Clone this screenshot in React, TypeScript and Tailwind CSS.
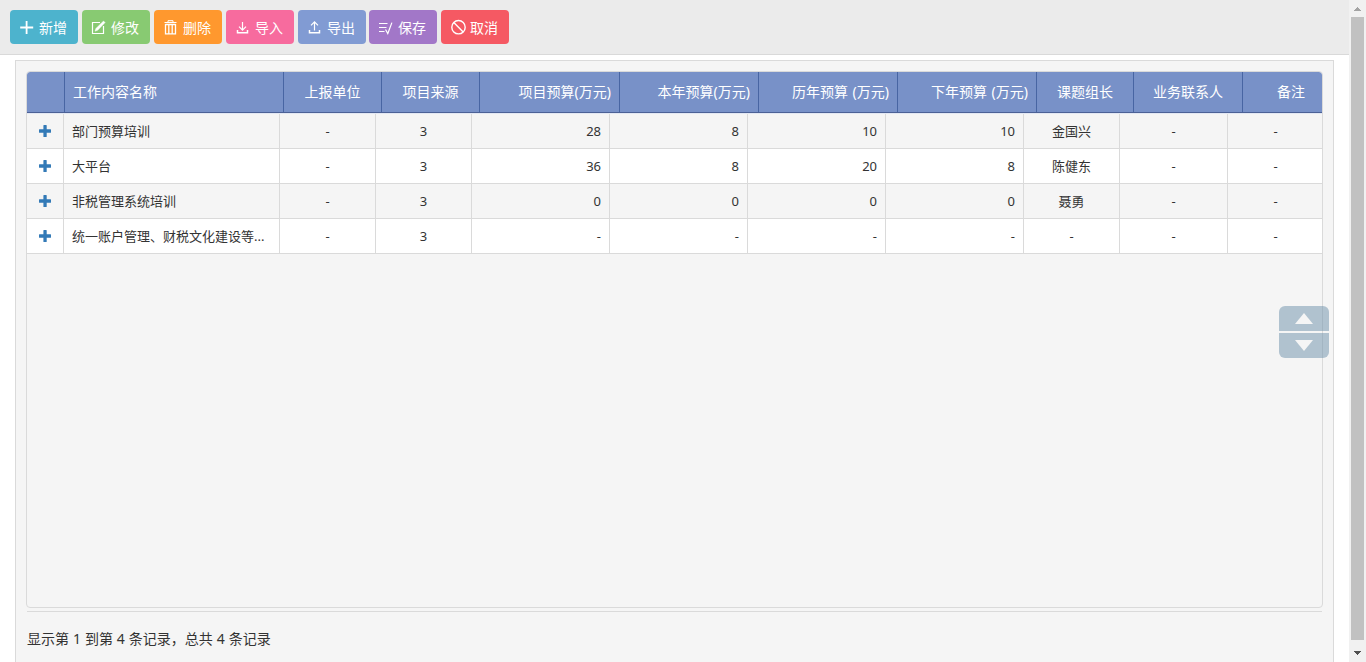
import React from 'react';

type Align = 'left' | 'center' | 'right';

const alignClass: Record<Align, string> = {
  left: 'justify-start',
  center: 'justify-center',
  right: 'justify-end',
};

interface Column {
  title: string;
  align: Align;
  head: string;
  body: string;
}

const columns: Column[] = [
  { title: '', align: 'center', head: 'w-[38px]', body: 'w-[37px]' },
  { title: '工作内容名称', align: 'left', head: 'w-[219px]', body: 'w-[216px]' },
  { title: '上报单位', align: 'center', head: 'w-[98px]', body: 'w-[96px]' },
  { title: '项目来源', align: 'center', head: 'w-[98px]', body: 'w-[96px]' },
  { title: '项目预算(万元)', align: 'right', head: 'w-[140px]', body: 'w-[138px]' },
  { title: '本年预算(万元)', align: 'right', head: 'w-[139px]', body: 'w-[138px]' },
  { title: '历年预算 (万元)', align: 'right', head: 'w-[139px]', body: 'w-[138px]' },
  { title: '下年预算 (万元)', align: 'right', head: 'w-[139px]', body: 'w-[138px]' },
  { title: '课题组长', align: 'center', head: 'w-[97px]', body: 'w-[96px]' },
  { title: '业务联系人', align: 'center', head: 'w-[109px]', body: 'w-[108px]' },
  { title: '备注', align: 'center', head: 'w-[97px]', body: 'w-[95px]' },
];

const rows: string[][] = [
  ['部门预算培训', '-', '3', '28', '8', '10', '10', '金国兴', '-', '-'],
  ['大平台', '-', '3', '36', '8', '20', '8', '陈健东', '-', '-'],
  ['非税管理系统培训', '-', '3', '0', '0', '0', '0', '聂勇', '-', '-'],
  ['统一账户管理、财税文化建设等...', '-', '3', '-', '-', '-', '-', '-', '-', '-'],
];

function Icon({ children }: { children: React.ReactNode }) {
  return (
    <svg
      width="16"
      height="16"
      viewBox="0 0 16 16"
      fill="none"
      stroke="currentColor"
      strokeWidth="1.2"
      className="shrink-0"
    >
      {children}
    </svg>
  );
}

const buttons = [
  {
    label: '新增',
    color: 'mr-1 bg-[#4db3cd]',
    icon: <path d="M7.6 2v13M1.2 8.500h13" strokeWidth="1.8" />,
  },
  {
    label: '修改',
    color: 'mr-1 bg-[#88ca72]',
    icon: (
      <>
        <path d="M9 3.500H1.500v11h11V7" />
        <path d="M4 12.200l.9-2.800 7.600-7.400 1.600 1.600-7.400 7.600z" fill="currentColor" strokeWidth="0.4" />
      </>
    ),
  },
  {
    label: '删除',
    color: 'mr-1 bg-[#ff982e]',
    icon: (
      <>
        <path d="M5 3V1.700h5V3M1.500 3.500h12" strokeWidth="1" />
        <path d="M2.500 5v9.800h10V5M2.500 5.500h10M5.800 5v9.500M9.200 5v9.500" strokeWidth="1.300" />
      </>
    ),
  },
  {
    label: '导入',
    color: 'mr-1 bg-[#f76b9e]',
    icon: (
      <>
        <path d="M7.500 3v8M4 7.700l3.500 3.500L11 7.700" />
        <path d="M2.500 11v2.800h10V11" strokeWidth="1.500" />
      </>
    ),
  },
  {
    label: '导出',
    color: 'mr-[3px] bg-[#819bd3]',
    icon: (
      <>
        <path d="M7.500 11.500V3M4 6.400l3.500-3.500L11 6.400" />
        <path d="M2.500 11v2.800h10V11" strokeWidth="1.500" />
      </>
    ),
  },
  {
    label: '保存',
    color: 'mr-1 bg-[#a277c8]',
    icon: <path d="M1 4.500h8.500M1 8.500h7.500M1 12.500h5.500M7.500 10.500l2.300 4L13.900 3.600" />,
  },
  {
    label: '取消',
    color: 'bg-[#f55963]',
    icon: (
      <>
        <circle cx="8.500" cy="8.200" r="6.700" strokeWidth="1.400" />
        <path d="M3.800 3.500l9.400 9.400" strokeWidth="1.400" />
      </>
    ),
  },
];

function Toolbar() {
  return (
    <div className="flex h-[55px] border-b border-[#d9d9d9] bg-[#ebebeb] pt-2.5 pl-2.5">
      {buttons.map((b) => (
        <button
          key={b.label}
          className={`flex h-[34px] w-[68px] shrink-0 items-center gap-1 rounded-[4px] pl-[9px] text-[14px] leading-5 whitespace-nowrap text-white ${b.color}`}
        >
          <Icon>{b.icon}</Icon>
          <span className="pt-0.5">{b.label}</span>
        </button>
      ))}
    </div>
  );
}

function TableHead() {
  return (
    <div className="flex h-[41px] overflow-hidden rounded-t-[3px] border-b border-[#4c6196] bg-[#7891c8] text-[14px] text-white [word-spacing:1px]">
      {columns.map((c, i) => (
        <div
          key={i}
          className={`flex shrink-0 items-center border-r border-[#4865a3] px-2 pb-0.5 whitespace-nowrap ${c.head} ${alignClass[c.align]}`}
        >
          {c.title}
        </div>
      ))}
    </div>
  );
}

function TableBody() {
  return (
    <div className="border-t border-[#e3e8f3] text-[13px] text-[#333]">
      {rows.map((row, r) => (
        <div
          key={r}
          className={`flex h-[35px] overflow-hidden border-b border-[#dadada] ${r % 2 === 0 ? 'bg-[#f5f5f5]' : 'bg-white'}`}
        >
          {columns.map((c, i) => (
            <div
              key={i}
              className={`flex shrink-0 items-center border-[#dadada] whitespace-nowrap ${i === 0 ? 'pr-[9px] pl-2' : 'px-2'} ${i < columns.length - 1 ? 'border-r' : ''} ${c.body} ${alignClass[c.align]}`}
            >
              {i === 0 ? (
                <svg width="12" height="12" viewBox="0 0 12 12" className="shrink-0" fill="#337ab7">
                  <path d="M4.900 0h2.300q.5 0 .5.5v3.800h3.800q.5 0 .5.5v2.400q0 .5-.5.5H7.700v3.800q0 .5-.5.5H4.900q-.5 0-.5-.5V7.700H.5q-.5 0-.5-.5V4.800q0-.5.5-.5h3.900V.5q0-.5.5-.5z" />
                </svg>
              ) : (
                <span className="pt-px">{row[i - 1]}</span>
              )}
            </div>
          ))}
        </div>
      ))}
    </div>
  );
}

function PageJump() {
  return (
    <div className="absolute top-[306px] left-[1279px] flex w-[50px] flex-col gap-[2px]">
      <button className="flex h-[25px] items-center justify-center rounded-t-[6px] bg-[#7698af]/55">
        <svg width="18" height="11" viewBox="0 0 18 11" fill="#f5f5f5">
          <path d="M9 0l9 11H0z" />
        </svg>
      </button>
      <button className="flex h-[25px] items-center justify-center rounded-b-[6px] bg-[#7698af]/55">
        <svg width="18" height="11" viewBox="0 0 18 11" fill="#f5f5f5">
          <path d="M9 11l9-11H0z" />
        </svg>
      </button>
    </div>
  );
}

function Scrollbar() {
  return (
    <div className="flex w-[17px] shrink-0 flex-col items-center bg-[#f1f1f1]">
      <div className="flex h-[17px] items-center justify-center">
        <svg width="7" height="4" viewBox="0 0 7 4" fill="#a3a3a3" shapeRendering="crispEdges">
          <path d="M3.500 0L7 4H0z" />
        </svg>
      </div>
      <div className="w-[13px] flex-1 bg-[#c1c1c1]" />
      <div className="flex h-[22px] items-center justify-center pt-[4px]">
        <svg width="7" height="4" viewBox="0 0 7 4" fill="#505050" shapeRendering="crispEdges">
          <path d="M3.500 4L7 0H0z" />
        </svg>
      </div>
    </div>
  );
}

export default function App() {
  return (
    <div className="relative flex h-[662px] w-[1366px] overflow-hidden bg-white font-['Noto_Sans','Noto_Sans_CJK_SC',sans-serif]">
      <div className="flex min-w-0 flex-1 flex-col">
        <Toolbar />
        <div className="mt-[5px] mr-[15px] ml-[15px] flex min-h-0 flex-1 flex-col border border-b-0 border-[#dadada] bg-[#f5f5f5] px-2.5 pt-2.5">
          <div className="h-[537px] w-[1297px] overflow-hidden rounded-[4px] border border-[#dadada]">
            <TableHead />
            <TableBody />
          </div>
          <div className="mx-px mt-[3px] w-[1295px] border-t border-[#dadada] pt-[17px] text-[14px] leading-5 text-[#333] [word-spacing:0.3px]">
            显示第 1 到第 4 条记录，总共 4 条记录
          </div>
        </div>
      </div>
      <Scrollbar />
      <PageJump />
    </div>
  );
}
